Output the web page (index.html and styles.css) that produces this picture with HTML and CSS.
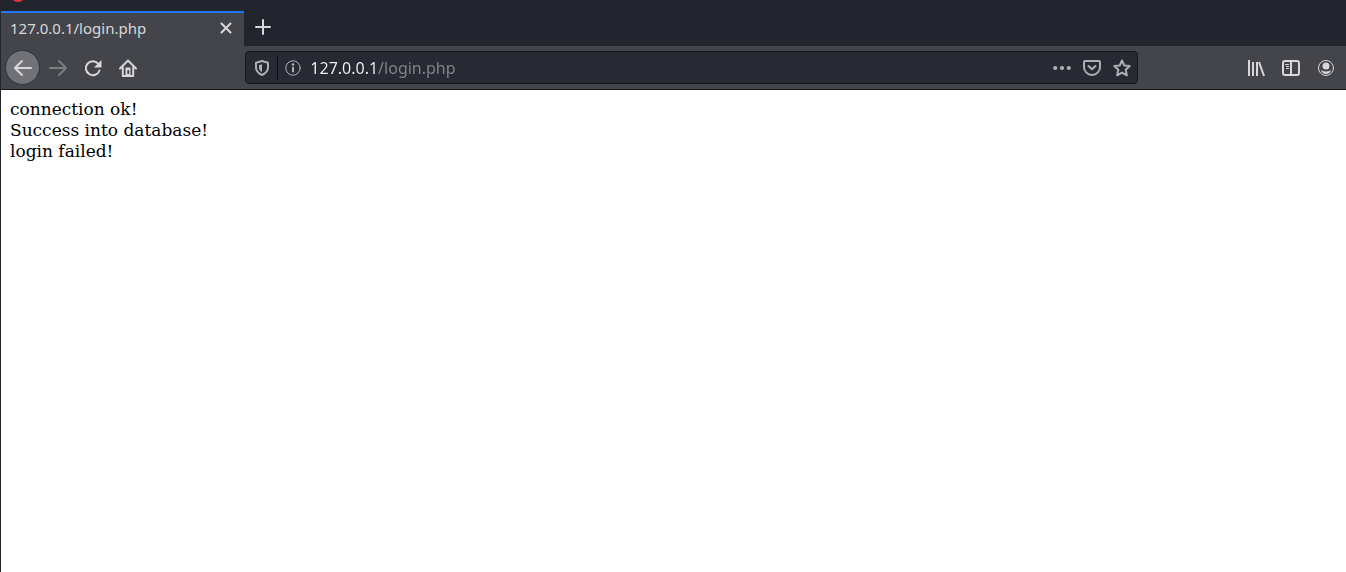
FILE: index.html
```html
<!DOCTYPE html>
<html lang="en">
<head>
  <meta charset="UTF-8" />
  <meta name="viewport" content="width=device-width, initial-scale=1" />
  <title>127.0.0.1/login.php</title>
  <link rel="stylesheet" href="styles.css">
</head>
<body>

  <div class="titlebar">
    <svg class="app-icon" width="16" height="3" viewBox="0 0 16 3"><circle cx="8" cy="-6" r="8" fill="#e8323c" /></svg>
  </div>

  <div class="tabs">
    <div class="tab">
      <span class="tab-title">127.0.0.1/login.php</span>
      <button class="tab-close" aria-label="Close tab">
        <svg width="12" height="12" viewBox="0 0 12 12"><path d="M1.5 1.5l9 9M10.5 1.5l-9 9" /></svg>
      </button>
    </div>
    <button class="new-tab" aria-label="New tab">
      <svg width="16" height="16" viewBox="0 0 16 16"><path d="M8 1v14M1 8h14" /></svg>
    </button>
  </div>

  <div class="toolbar">
    <button class="tool-btn back" aria-label="Back">
      <svg width="20" height="20" viewBox="0 0 20 20"><path d="M18 10H2.5M9 3l-7 7 7 7" /></svg>
    </button>
    <button class="tool-btn" aria-label="Forward" disabled>
      <svg width="20" height="20" viewBox="0 0 20 20"><path d="M2 10h15.5M11 3l7 7-7 7" /></svg>
    </button>
    <button class="tool-btn" aria-label="Reload">
      <svg width="20" height="20" viewBox="0 0 20 20"><path d="M15.5 6A7 7 0 1 0 16.5 12.5" /><path d="M18.5 2v7.5H11z" class="fill" /></svg>
    </button>
    <button class="tool-btn" aria-label="Home">
      <svg width="20" height="20" viewBox="0 0 20 20"><path d="M2 10.5l8-8 8 8M4.8 9.5V18h10.4V9.5" /><path d="M7.5 9.5h5V18h-5z" class="fill" /><path d="M10.3 13v2" class="knob" /></svg>
    </button>

    <div class="spacer"></div>

    <div class="urlbar">
      <button class="url-btn shield" aria-label="Tracking protection">
        <svg width="16" height="16" viewBox="0 0 16 16"><path d="M8 1l6 1.8v4.7c0 3.7-2.7 5.9-6 7.5-3.3-1.6-6-3.8-6-7.5V2.8z" /><path d="M8 4.2V12C6 11 5 9.5 5 7.5V5z" class="fill" /></svg>
      </button>
      <button class="url-btn" aria-label="Site information">
        <svg width="16" height="16" viewBox="0 0 16 16"><circle cx="8" cy="8" r="7.2" class="thin" /><path d="M8 7.5v4" /><circle cx="8" cy="4.5" r="1.3" class="fill" /></svg>
      </button>
      <input type="text" class="url-input" aria-label="Address" value="127.0.0.1/login.php" spellcheck="false" />
      <button class="url-btn" aria-label="Page actions">
        <svg width="18" height="18" viewBox="0 0 18 18"><g class="fill"><circle cx="2.2" cy="9" r="2.1" /><circle cx="9" cy="9" r="2.1" /><circle cx="15.8" cy="9" r="2.1" /></g></svg>
      </button>
      <button class="url-btn" aria-label="Save to Pocket">
        <svg width="18" height="18" viewBox="0 0 18 18"><path d="M2 2h14q1 0 1 1v5a8 8 0 0 1-16 0V3q0-1 1-1zM5.5 7L9 10.3 12.5 7" /></svg>
      </button>
      <button class="url-btn" aria-label="Bookmark this page">
        <svg width="18" height="18" viewBox="0 0 18 18"><path d="M9 1.5l2.3 5 5.4.6-4 3.7 1.1 5.5L9 13.6l-4.8 2.7 1.1-5.5-4-3.7 5.4-.6z" /></svg>
      </button>
    </div>

    <div class="spacer"></div>

    <button class="tool-btn" aria-label="Library">
      <svg class="library" width="18" height="18" viewBox="0 0 18 18"><path d="M2 1v16M6 3v14M10 3v14M12 3l5 14" /></svg>
    </button>
    <button class="tool-btn" aria-label="Sidebars">
      <svg width="18" height="18" viewBox="0 0 18 18"><rect x="1" y="2" width="16" height="14" rx="2" /><path d="M9 2v14" /><path d="M3.5 5.5h3M4.5 7.5h2M4.5 9.5h2" class="thin" /></svg>
    </button>
    <button class="tool-btn" aria-label="Account">
      <svg width="18" height="18" viewBox="0 0 18 18"><circle cx="9" cy="9" r="7.5" class="thin" /><circle cx="9" cy="7" r="3.5" class="fill" /><path d="M4 11q5 3 10 0-1 4-5 4t-5-4z" class="fill" /></svg>
    </button>
  </div>

  <div class="page">
    connection ok!<br>
    Success into database!<br>
    login failed!
  </div>

</body>
</html>
```
FILE: styles.css
```css
* {
  box-sizing: border-box;
}

body {
  margin: 0;
  min-height: 100vh;
  display: flex;
  flex-direction: column;
  border-left: 1px solid #23252e;
  background-color: #23252e;
  color: #d8d8d8;
  font-family: "Noto Sans", sans-serif;
}

button {
  display: flex;
  justify-content: center;
  align-items: center;
  padding: 0;
  border: none;
  background: none;
  color: inherit;
  cursor: pointer;
}

svg {
  display: block;
  fill: none;
  stroke: currentColor;
  stroke-width: 2;
  stroke-linejoin: round;
  stroke-linecap: round;
}

.library {
  stroke-linecap: butt;
}

.fill {
  fill: currentColor;
  stroke: none;
}

.thin {
  stroke-width: 1;
}

.knob {
  stroke: #43454b;
}

.titlebar {
  height: 11px;
  padding-left: 9px;
}

.app-icon {
  stroke: none;
}

.tabs {
  display: flex;
  height: 35px;
}

.tab {
  display: flex;
  align-items: center;
  justify-content: space-between;
  width: 243px;
  padding: 0 9px 4px;
  border-top: 2px solid #2176f5;
  background-color: #43454b;
}

.tab-title {
  font-size: 15px;
}

.tab-close {
  width: 18px;
  height: 18px;
}

.new-tab {
  width: 37px;
  height: 32px;
}

.toolbar {
  display: flex;
  align-items: center;
  height: 44px;
  padding: 0 3px 0 4px;
  border-bottom: 1px solid #17181c;
  background-color: #43454b;
}

.tool-btn {
  flex-shrink: 0;
  width: 35px;
  height: 35px;
}

.tool-btn:disabled {
  color: #7c7d81;
}

.back {
  border: 1px solid #303136;
  border-radius: 50%;
  background-color: #717277;
}

.spacer {
  width: 7.5%;
}

.urlbar {
  flex: 1;
  display: flex;
  align-items: center;
  min-width: 0;
  height: 33px;
  border: 1px solid #17181c;
  border-radius: 4px;
  background-color: #272933;
}

.url-btn {
  flex-shrink: 0;
  width: 30px;
  height: 25px;
  color: #b0b0b4;
}

.shield {
  width: 32px;
  border-right: 1px solid #0e0f12;
}

/* host part is bright, the path after it is dimmed */
.url-input {
  flex: 1;
  min-width: 0;
  padding: 0 0 0 2px;
  border: none;
  outline: none;
  background: linear-gradient(to right, #f4f4f4 70px, #85868b 70px);
  -webkit-background-clip: text;
  background-clip: text;
  color: transparent;
  caret-color: #f4f4f4;
  font-family: inherit;
  font-size: 16px;
}

.page {
  flex: 1;
  padding: 9px;
  background-color: #ffffff;
  color: #000000;
  font-family: "DejaVu Serif", serif;
  font-size: 17px;
  line-height: 21px;
}
```
